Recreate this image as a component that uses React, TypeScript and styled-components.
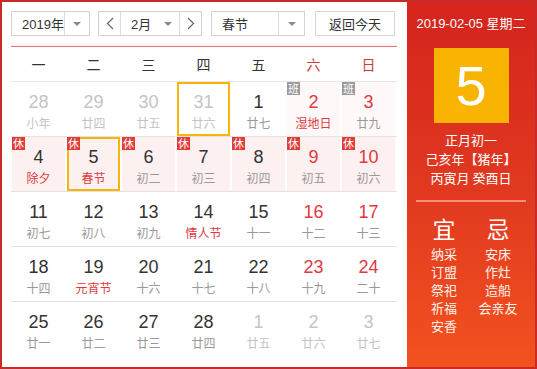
import React from "react";
import styled, { createGlobalStyle, css } from "styled-components";

const GlobalStyle = createGlobalStyle`
  html, body {
    margin: 0;
    padding: 0;
    background: #fff;
  }
  body {
    font-family: "Liberation Sans", "Noto Sans CJK SC", sans-serif;
    color: #333;
  }
`;

const Frame = styled.div`
  box-sizing: border-box;
  width: 537px;
  height: 369px;
  border: 2px solid #c62b27;
  display: flex;
  overflow: hidden;
`;

const LeftPane = styled.div`
  width: 405px;
  background: #fff;
  padding: 9px 10px 0 9px;
  box-sizing: border-box;
`;

const RightPane = styled.div`
  flex: 1;
  background: linear-gradient(180deg, #d5241d 0%, #e23a20 55%, #f3521f 100%);
  color: #fff;
  display: flex;
  flex-direction: column;
  align-items: center;
  padding-top: 13px;
  box-sizing: border-box;
`;

// ---------- toolbar ----------

const Toolbar = styled.div`
  display: flex;
  align-items: center;
  height: 25px;
`;

const Select = styled.div<{ $w: number; $ml?: number }>`
  box-sizing: border-box;
  display: flex;
  align-items: stretch;
  width: ${(p) => p.$w}px;
  height: 25px;
  margin-left: ${(p) => p.$ml ?? 0}px;
  border: 1px solid #d3d3d3;
  background: #fff;
  font-size: 13px;
  color: #333;
`;

const SelectText = styled.div<{ $pl?: number }>`
  flex: 1;
  display: flex;
  align-items: center;
  padding-left: ${(p) => p.$pl ?? 10}px;
  font-family: "Liberation Sans", "Noto Sans CJK SC", sans-serif;
`;

const ArrowCell = styled.div<{ $w: number; $divider?: boolean }>`
  width: ${(p) => p.$w}px;
  display: flex;
  align-items: center;
  justify-content: center;
  ${(p) =>
    p.$divider &&
    css`
      border-left: 1px solid #dcdcdc;
    `}
`;

const Caret = styled.span`
  width: 0;
  height: 0;
  border-left: 4px solid transparent;
  border-right: 4px solid transparent;
  border-top: 4px solid #8a8a8a;
`;

const NavCell = styled.div<{ $side: "l" | "r" }>`
  width: 21px;
  display: flex;
  align-items: center;
  justify-content: center;
  ${(p) =>
    p.$side === "l"
      ? css`
          border-right: 1px solid #dcdcdc;
        `
      : css`
          border-left: 1px solid #dcdcdc;
        `}
`;

const TodayButton = styled.button`
  box-sizing: border-box;
  margin-left: 10px;
  width: 80px;
  height: 25px;
  border: 1px solid #d8d8d8;
  background: #fff;
  font-size: 13px;
  color: #333;
  padding: 0;
  font-family: "Noto Sans CJK SC", sans-serif;
`;

const RedRule = styled.div`
  margin-top: 10px;
  height: 1px;
  background: #de7777;
  box-shadow: 0 -1px 3px rgba(222, 100, 100, 0.35);
`;

// ---------- grid ----------

const WeekHeader = styled.div`
  display: grid;
  grid-template-columns: repeat(7, 55px);
  height: 34px;
  border-bottom: 1px solid #e6e6e6;
`;

const WeekName = styled.div<{ $red?: boolean }>`
  display: flex;
  align-items: center;
  justify-content: center;
  font-size: 14px;
  font-family: "Noto Sans CJK SC", sans-serif;
  color: ${(p) => (p.$red ? "#d03a3a" : "#333")};
`;

const WeekRow = styled.div<{ $last?: boolean }>`
  display: grid;
  grid-template-columns: repeat(7, 55px);
  height: 55px;
  box-sizing: border-box;
  border-bottom: ${(p) => (p.$last ? "none" : "1px solid #e3e3e3")};
`;

const Cell = styled.div<{ $bg: string; $selected?: boolean }>`
  position: relative;
  box-sizing: border-box;
  margin: 0 1px;
  height: 54px;
  background: ${(p) => p.$bg};
  border: 2px solid ${(p) => (p.$selected ? "#f5b50a" : "transparent")};
  display: flex;
  flex-direction: column;
  align-items: center;
  padding-top: 7px;
`;

const DayNum = styled.div<{ $color: string }>`
  font-family: "Liberation Sans", Arial, sans-serif;
  font-size: 18px;
  line-height: 22px;
  color: ${(p) => p.$color};
`;

const Lunar = styled.div<{ $color: string }>`
  font-family: "Noto Sans CJK SC", sans-serif;
  font-size: 12px;
  line-height: 16px;
  margin-top: 2px;
  color: ${(p) => p.$color};
`;

const Badge = styled.span<{ $kind: "休" | "班" }>`
  position: absolute;
  left: -2px;
  top: -2px;
  width: 13px;
  height: 13px;
  line-height: 13px;
  font-size: 11px;
  text-align: center;
  color: #fff;
  font-family: "Noto Sans CJK SC", sans-serif;
  background: ${(p) => (p.$kind === "休" ? "#e33b36" : "#9a9a9a")};
`;

// ---------- right pane ----------

const DateLine = styled.div`
  font-size: 13px;
  line-height: 18px;
  font-family: "Liberation Sans", "Noto Sans CJK SC", sans-serif;
  white-space: nowrap;
`;

const BigDay = styled.div`
  margin-top: 15px;
  width: 75px;
  height: 75px;
  background: #f8b400;
  display: flex;
  align-items: center;
  justify-content: center;
  font-family: "Liberation Sans", Arial, sans-serif;
  font-size: 56px;
  color: #fff;
`;

const LunarInfo = styled.div`
  margin-top: 7px;
  text-align: center;
  font-size: 13px;
  line-height: 19px;
  font-family: "Noto Sans CJK SC", sans-serif;
  white-space: nowrap;
`;

const PaneRule = styled.div`
  margin-top: 13px;
  width: 110px;
  height: 2px;
  background: rgba(255, 170, 150, 0.75);
`;

const Almanac = styled.div`
  margin-top: 12px;
  display: grid;
  grid-template-columns: 54px 54px;
  font-family: "Noto Sans CJK SC", sans-serif;
`;

const AlmanacCol = styled.div`
  display: flex;
  flex-direction: column;
  align-items: center;
`;

const AlmanacHead = styled.div`
  font-size: 23px;
  line-height: 28px;
  margin-bottom: 3px;
`;

const AlmanacItem = styled.div`
  font-size: 13px;
  line-height: 18px;
  white-space: nowrap;
  color: #fff4ec;
`;

// ---------- data ----------

type Day = {
  n: number;
  lunar: string;
  out?: boolean;
  fest?: boolean;
  badge?: "休" | "班";
  selected?: boolean;
};

const weeks: Day[][] = [
  [
    { n: 28, lunar: "小年", out: true },
    { n: 29, lunar: "廿四", out: true },
    { n: 30, lunar: "廿五", out: true },
    { n: 31, lunar: "廿六", out: true, selected: true },
    { n: 1, lunar: "廿七" },
    { n: 2, lunar: "湿地日", fest: true, badge: "班" },
    { n: 3, lunar: "廿九", badge: "班" },
  ],
  [
    { n: 4, lunar: "除夕", fest: true, badge: "休" },
    { n: 5, lunar: "春节", fest: true, badge: "休", selected: true },
    { n: 6, lunar: "初二", badge: "休" },
    { n: 7, lunar: "初三", badge: "休" },
    { n: 8, lunar: "初四", badge: "休" },
    { n: 9, lunar: "初五", badge: "休" },
    { n: 10, lunar: "初六", badge: "休" },
  ],
  [
    { n: 11, lunar: "初七" },
    { n: 12, lunar: "初八" },
    { n: 13, lunar: "初九" },
    { n: 14, lunar: "情人节", fest: true },
    { n: 15, lunar: "十一" },
    { n: 16, lunar: "十二" },
    { n: 17, lunar: "十三" },
  ],
  [
    { n: 18, lunar: "十四" },
    { n: 19, lunar: "元宵节", fest: true },
    { n: 20, lunar: "十六" },
    { n: 21, lunar: "十七" },
    { n: 22, lunar: "十八" },
    { n: 23, lunar: "十九" },
    { n: 24, lunar: "二十" },
  ],
  [
    { n: 25, lunar: "廿一" },
    { n: 26, lunar: "廿二" },
    { n: 27, lunar: "廿三" },
    { n: 28, lunar: "廿四" },
    { n: 1, lunar: "廿五", out: true },
    { n: 2, lunar: "廿六", out: true },
    { n: 3, lunar: "廿七", out: true },
  ],
];

const weekNames = ["一", "二", "三", "四", "五", "六", "日"];
const yi = ["纳采", "订盟", "祭祀", "祈福", "安香"];
const ji = ["安床", "作灶", "造船", "会亲友"];

const Chevron = ({ dir }: { dir: "l" | "r" }) => (
  <svg width="8" height="13" viewBox="0 0 8 13">
    <polyline
      points={dir === "l" ? "7,1 1.5,6.5 7,12" : "1,1 6.5,6.5 1,12"}
      fill="none"
      stroke="#666"
      strokeWidth="1.2"
    />
  </svg>
);

const numColor = (d: Day, col: number) =>
  d.out ? "#c4c4c4" : col >= 5 ? "#e0393e" : "#333";
const lunarColor = (d: Day) =>
  d.out ? "#c4c4c4" : d.fest ? "#e0393e" : "#999";
const cellBg = (d: Day) =>
  d.badge === "休" ? "#fdf0f0" : d.badge === "班" ? "#fef8f8" : "#fff";

const App: React.FunctionComponent = () => {
  return (
    <>
      <GlobalStyle />
      <Frame>
        <LeftPane>
          <Toolbar>
            <Select $w={79}>
              <SelectText>2019年</SelectText>
              <ArrowCell $w={24} $divider>
                <Caret />
              </ArrowCell>
            </Select>
            <Select $w={104} $ml={8}>
              <NavCell $side="l">
                <Chevron dir="l" />
              </NavCell>
              <SelectText>2月</SelectText>
              <ArrowCell $w={22}>
                <Caret />
              </ArrowCell>
              <NavCell $side="r">
                <Chevron dir="r" />
              </NavCell>
            </Select>
            <Select $w={94} $ml={9}>
              <SelectText>春节</SelectText>
              <ArrowCell $w={25} $divider>
                <Caret />
              </ArrowCell>
            </Select>
            <TodayButton>返回今天</TodayButton>
          </Toolbar>

          <RedRule />

          <WeekHeader>
            {weekNames.map((w, i) => (
              <WeekName key={w} $red={i >= 5}>
                {w}
              </WeekName>
            ))}
          </WeekHeader>

          {weeks.map((week, r) => (
            <WeekRow key={r} $last={r === weeks.length - 1}>
              {week.map((d, c) => (
                <Cell key={c} $bg={cellBg(d)} $selected={d.selected}>
                  {d.badge && <Badge $kind={d.badge}>{d.badge}</Badge>}
                  <DayNum $color={numColor(d, c)}>{d.n}</DayNum>
                  <Lunar $color={lunarColor(d)}>{d.lunar}</Lunar>
                </Cell>
              ))}
            </WeekRow>
          ))}
        </LeftPane>

        <RightPane>
          <DateLine>2019-02-05 星期二</DateLine>
          <BigDay>5</BigDay>
          <LunarInfo>
            <div>正月初一</div>
            <div>己亥年【猪年】</div>
            <div>丙寅月 癸酉日</div>
          </LunarInfo>
          <PaneRule />
          <Almanac>
            <AlmanacCol>
              <AlmanacHead>宜</AlmanacHead>
              {yi.map((t) => (
                <AlmanacItem key={t}>{t}</AlmanacItem>
              ))}
            </AlmanacCol>
            <AlmanacCol>
              <AlmanacHead>忌</AlmanacHead>
              {ji.map((t) => (
                <AlmanacItem key={t}>{t}</AlmanacItem>
              ))}
            </AlmanacCol>
          </Almanac>
        </RightPane>
      </Frame>
    </>
  );
};

export default App;
